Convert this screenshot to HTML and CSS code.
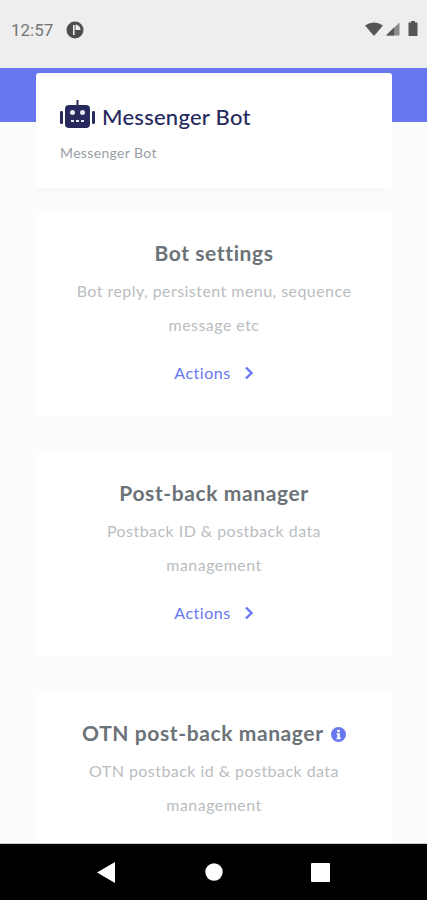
FILE: index.html
```html
<!DOCTYPE html>
<html lang="en">

<head>
    <meta charset="UTF-8">
    <meta name="viewport" content="width=device-width, initial-scale=1.0">
    <title>Messenger Bot</title>
    <link rel="stylesheet" href="styles.css">
</head>

<body>
    <div class="phone">
        <div class="status">
            <div class="status-left">
                <span class="time">12:57</span>
                <svg width="18" height="18" viewBox="0 0 18 18">
                    <circle cx="9" cy="9" r="8.5" fill="#4d4d4d" />
                    <path d="M9.5 3.5a5.5 5.5 0 0 1 5 5.5H9.5z" fill="#eee" />
                    <rect x="7" y="4" width="1.6" height="10" fill="#eee" />
                </svg>
            </div>
            <div class="status-right">
                <svg width="18" height="14" viewBox="0 0 18 14">
                    <path d="M0 3.6Q9-2.6 18 3.6L9 14z" fill="#555" />
                </svg>
                <svg width="15" height="14" viewBox="0 0 15 14">
                    <path d="M14.5 0.5V13.5H1z" fill="#8a8a8a" />
                    <path d="M9 5.6V13.5H1z" fill="#555" />
                </svg>
                <svg class="battery" width="10" height="15" viewBox="0 0 10 15">
                    <path d="M3 0H7V1.5H9.5V15H.5V1.5H3z" fill="#555" />
                </svg>
            </div>
        </div>

        <main class="content">
            <div class="band"></div>
            <section class="head-card">
                <h1>
                    <svg class="robot" width="36" height="28" viewBox="0 0 36 28">
                        <rect x="5" y="5" width="25" height="23" rx="4" fill="#262a5c" />
                        <rect x="16.5" y="0" width="2" height="6" fill="#262a5c" />
                        <rect x="0" y="11" width="3" height="13" rx="1.2" fill="#262a5c" />
                        <rect x="32" y="11" width="3" height="13" rx="1.2" fill="#262a5c" />
                        <circle cx="12.5" cy="12.5" r="2.5" fill="#e6e7f0" />
                        <circle cx="22.5" cy="12.5" r="2.5" fill="#e6e7f0" />
                        <rect x="11" y="20" width="3" height="2" fill="#e6e7f0" />
                        <rect x="16" y="20" width="3" height="2" fill="#e6e7f0" />
                        <rect x="21" y="20" width="3" height="2" fill="#e6e7f0" />
                    </svg>
                    Messenger Bot
                </h1>
                <p>Messenger Bot</p>
            </section>

            <section class="card">
                <h2>Bot settings</h2>
                <p>Bot reply, persistent menu, sequence message etc</p>
                <a class="actions" href="#">Actions
                    <svg width="10" height="14" viewBox="0 0 10 14">
                        <path d="M2 1.5L7.5 7L2 12.5" fill="none" stroke="#6777ef" stroke-width="2.4" />
                    </svg>
                </a>
            </section>

            <section class="card">
                <h2>Post-back manager</h2>
                <p>Postback ID &amp; postback data management</p>
                <a class="actions" href="#">Actions
                    <svg width="10" height="14" viewBox="0 0 10 14">
                        <path d="M2 1.5L7.5 7L2 12.5" fill="none" stroke="#6777ef" stroke-width="2.4" />
                    </svg>
                </a>
            </section>

            <section class="card">
                <h2>OTN post-back manager
                    <svg class="info" width="15" height="15" viewBox="0 0 15 15">
                        <circle cx="7.5" cy="7.5" r="7.5" fill="#6777ef" />
                        <rect x="6.2" y="2.8" width="2.6" height="2.4" fill="#fff" />
                        <path d="M5.6 6.2H8.8V10.6H9.6V12.2H5.6V10.6H6.4V7.8H5.6z" fill="#fff" />
                    </svg>
                </h2>
                <p>OTN postback id &amp; postback data management</p>
            </section>
        </main>

        <div class="navbar">
            <svg width="20" height="21" viewBox="0 0 20 21">
                <path d="M18 0V21L0 10.5z" fill="#fff" />
            </svg>
            <svg width="18" height="18" viewBox="0 0 18 18">
                <circle cx="9" cy="9" r="8.7" fill="#fff" />
            </svg>
            <svg width="19" height="19" viewBox="0 0 19 19">
                <rect width="19" height="19" rx="1" fill="#fff" />
            </svg>
        </div>
    </div>
</body>

</html>
```

FILE: styles.css
```css
* {
    margin: 0;
    padding: 0;
    box-sizing: border-box;
    font-family: 'Lato', 'Noto Sans', sans-serif;
}

body {
    background-color: #fafdfb;
}

.phone {
    width: 427px;
    height: 900px;
    display: flex;
    flex-direction: column;
    overflow: hidden;
}

.status {
    height: 68px;
    flex-shrink: 0;
    background-color: #eeeeee;
    display: flex;
    align-items: flex-start;
    justify-content: space-between;
    padding: 21px 9px 0 11px;
}

.status-left {
    display: flex;
    align-items: center;
    gap: 13px;
}

.time {
    font-family: 'Roboto', sans-serif;
    font-size: 17px;
    line-height: 18px;
    color: #757575;
}

.status-right {
    display: flex;
    align-items: center;
    gap: 2px;
}

.battery {
    margin-left: 6px;
}

.content {
    flex: 1;
    min-height: 0;
    overflow: hidden;
    background-color: #fafdfb;
}

.band {
    height: 54px;
    background-color: #6777ef;
}

.head-card {
    margin: -49px 35px 24px 36px;
    height: 115px;
    padding: 28px 24px 0;
    background-color: #fff;
    border-radius: 3px;
    box-shadow: 0 4px 8px rgba(0, 0, 0, 0.02);
    position: relative;
}

.head-card h1 {
    display: flex;
    align-items: center;
    gap: 6px;
    height: 32px;
    font-size: 22px;
    font-weight: 500;
    letter-spacing: 0.25px;
    line-height: 32px;
    color: #262a5c;
}

.robot {
    align-self: flex-start;
    margin-top: -1px;
}

.head-card p {
    margin-top: 10px;
    font-size: 14px;
    letter-spacing: 0.35px;
    line-height: 20px;
    color: #98a0a6;
}

.card {
    margin: 0 35px 36px 36px;
    height: 204px;
    padding: 26px 30px 0;
    background-color: #fff;
    border-radius: 3px;
    box-shadow: 0 4px 8px rgba(0, 0, 0, 0.01);
    text-align: center;
}

.card h2 {
    font-size: 21px;
    font-weight: 700;
    letter-spacing: 0.6px;
    line-height: 30px;
    color: #6c7378;
}

.info {
    vertical-align: -1px;
    margin-left: 2px;
}

.card p {
    margin-top: 6px;
    font-size: 16px;
    letter-spacing: 0.45px;
    line-height: 34px;
    color: #babdbf;
}

.actions {
    display: flex;
    align-items: center;
    justify-content: center;
    gap: 13px;
    margin-top: 19px;
    font-size: 16px;
    letter-spacing: 0.5px;
    line-height: 24px;
    color: #6777ef;
    text-decoration: none;
}

.navbar {
    height: 57px;
    flex-shrink: 0;
    background-color: #000;
    border-top: 1px solid #ccc;
    display: flex;
    align-items: center;
    justify-content: space-between;
    padding: 0 97px;
}
```
